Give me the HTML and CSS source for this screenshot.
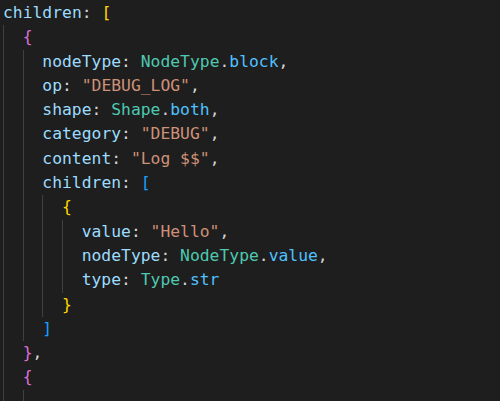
FILE: index.html
```html
<!DOCTYPE html>
<html>
<head>
<meta charset="utf-8">
<link rel="stylesheet" href="styles.css">
</head>
<body>
<div class="editor">
  <div class="line"><span class="k">children</span><span class="p">: </span><span class="b1">[</span></div>
  <div class="line"><span class="g"></span><span class="b2">{</span></div>
  <div class="line"><span class="g"></span><span class="g"></span><span class="k">nodeType</span><span class="p">: </span><span class="c">NodeType</span><span class="p">.</span><span class="m">block</span><span class="p">,</span></div>
  <div class="line"><span class="g"></span><span class="g"></span><span class="k">op</span><span class="p">: </span><span class="s">"DEBUG_LOG"</span><span class="p">,</span></div>
  <div class="line"><span class="g"></span><span class="g"></span><span class="k">shape</span><span class="p">: </span><span class="c">Shape</span><span class="p">.</span><span class="m">both</span><span class="p">,</span></div>
  <div class="line"><span class="g"></span><span class="g"></span><span class="k">category</span><span class="p">: </span><span class="s">"DEBUG"</span><span class="p">,</span></div>
  <div class="line"><span class="g"></span><span class="g"></span><span class="k">content</span><span class="p">: </span><span class="s">"Log $$"</span><span class="p">,</span></div>
  <div class="line"><span class="g"></span><span class="g"></span><span class="k">children</span><span class="p">: </span><span class="b3">[</span></div>
  <div class="line"><span class="g"></span><span class="g"></span><span class="g"></span><span class="b1">{</span></div>
  <div class="line"><span class="g"></span><span class="g"></span><span class="g"></span><span class="g"></span><span class="k">value</span><span class="p">: </span><span class="s">"Hello"</span><span class="p">,</span></div>
  <div class="line"><span class="g"></span><span class="g"></span><span class="g"></span><span class="g"></span><span class="k">nodeType</span><span class="p">: </span><span class="c">NodeType</span><span class="p">.</span><span class="m">value</span><span class="p">,</span></div>
  <div class="line"><span class="g"></span><span class="g"></span><span class="g"></span><span class="g"></span><span class="k">type</span><span class="p">: </span><span class="c">Type</span><span class="p">.</span><span class="m">str</span></div>
  <div class="line"><span class="g"></span><span class="g"></span><span class="g"></span><span class="b1">}</span></div>
  <div class="line"><span class="g"></span><span class="g"></span><span class="b3">]</span></div>
  <div class="line"><span class="g"></span><span class="b2">}</span><span class="p">,</span></div>
  <div class="line"><span class="g"></span><span class="b2">{</span></div>
  <div class="line"><span class="g"></span><span class="g"></span></div>
</div>
</body>
</html>
```
FILE: styles.css
```css
html, body {
  margin: 0;
  padding: 0;
  background: #1e1e1e;
  overflow: hidden;
}
.editor {
  font-family: "DejaVu Sans Mono", monospace;
  font-size: 16.35px;
  line-height: 24.3px;
  padding: 1px 0 0 3px;
  color: #d4d4d4;
  height: 400px;
  overflow: hidden;
}
.line {
  display: flex;
  height: 24.3px;
  white-space: pre;
}
.g {
  display: inline-block;
  width: 2ch;
  flex: none;
  box-sizing: border-box;
  border-left: 1px solid #404040;
  height: 24.3px;
}
.k { color: #9cdcfe; }
.p { color: #d4d4d4; }
.s { color: #ce9178; }
.c { color: #4ec9b0; }
.m { color: #4fc1ff; }
.b1 { color: #ffd700; }
.b2 { color: #da70d6; }
.b3 { color: #179fff; }
```
